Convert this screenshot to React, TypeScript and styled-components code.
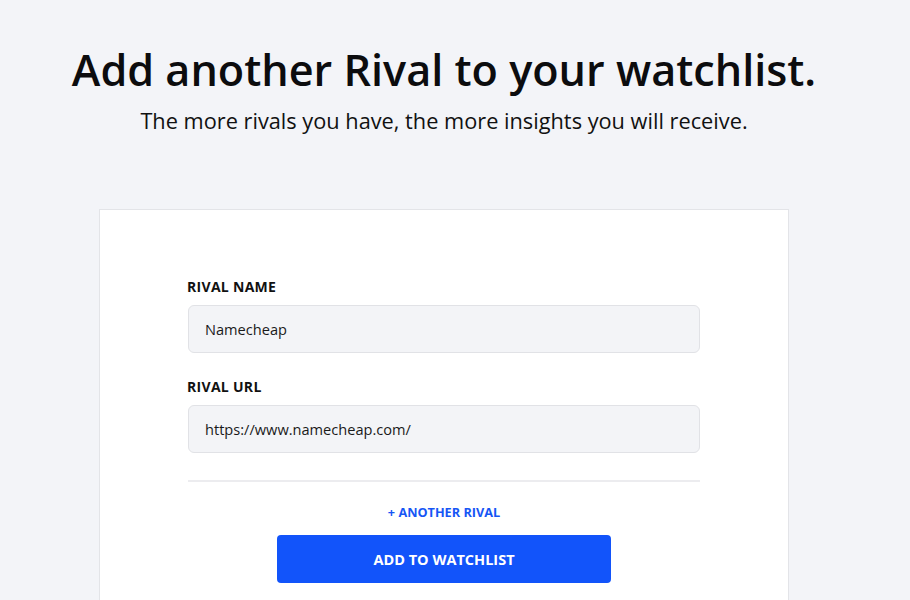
import React from "react";
import styled, { createGlobalStyle } from "styled-components";

const Global = createGlobalStyle`
  html, body { margin: 0; padding: 0; background: #f3f4f8; }
  body { font-family: "Open Sans", "Noto Sans", sans-serif; color: #111; overflow: hidden; }
  * { box-sizing: border-box; }
`;

const Page = styled.div`
  width: 888px;
  display: flex;
  flex-direction: column;
  align-items: center;
  padding-top: 40px;
`;

const Title = styled.h1`
  margin: 0;
  font-size: 43.2px;
  font-weight: 600;
  line-height: 60px;
  color: #0c0c0e;
`;

const Subtitle = styled.p`
  margin: 6px 0 0;
  font-size: 21.75px;
  line-height: 30px;
  color: #111;
`;

const Card = styled.section`
  margin-top: 73px;
  width: 690px;
  height: 420px;
  background: #fff;
  border: 1px solid #e3e4e8;
  display: flex;
  flex-direction: column;
  align-items: center;
  padding-top: 67px;
`;

const Form = styled.div`
  width: 512px;
  display: flex;
  flex-direction: column;
`;

const Field = styled.div`
  display: flex;
  flex-direction: column;
  gap: 8px;
  margin-bottom: 24px;
`;

const Label = styled.label`
  font-size: 14px;
  font-weight: 700;
  line-height: 20px;
  letter-spacing: 0.3px;
  color: #111;
  margin-left: -1px;
`;

const Input = styled.div`
  height: 48px;
  background: #f3f4f7;
  border: 1px solid #e1e2e6;
  border-radius: 6px;
  display: flex;
  align-items: center;
  padding: 0 16px;
  font-size: 14.6px;
  color: #1a1a1a;
`;

const Divider = styled.hr`
  border: none;
  border-top: 2px solid #ececef;
  margin: 3px 0 0;
  width: 100%;
`;

const AddLink = styled.button`
  align-self: center;
  margin-top: 21px;
  background: none;
  border: none;
  padding: 0;
  font-family: inherit;
  font-size: 12.7px;
  font-weight: 700;
  line-height: 18px;
  color: #1656f5;
  cursor: pointer;
`;

const Submit = styled.button`
  align-self: center;
  margin-top: 14px;
  width: 334px;
  height: 48px;
  border: none;
  border-radius: 4px;
  background: #1254fa;
  color: #fff;
  font-family: inherit;
  font-size: 14.5px;
  font-weight: 700;
  cursor: pointer;
`;

export default function App() {
  return (
    <>
      <Global />
      <Page>
        <Title>Add another Rival to your watchlist.</Title>
        <Subtitle>The more rivals you have, the more insights you will receive.</Subtitle>
        <Card>
          <Form>
            <Field>
              <Label>RIVAL NAME</Label>
              <Input>Namecheap</Input>
            </Field>
            <Field>
              <Label>RIVAL URL</Label>
              <Input>https://www.namecheap.com/</Input>
            </Field>
            <Divider />
            <AddLink>+ ANOTHER RIVAL</AddLink>
            <Submit>ADD TO WATCHLIST</Submit>
          </Form>
        </Card>
      </Page>
    </>
  );
}
